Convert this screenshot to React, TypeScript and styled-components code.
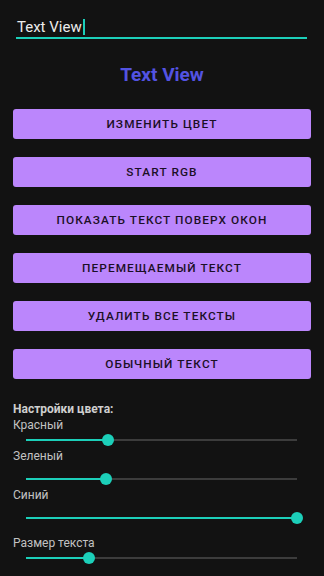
import React from "react";
import styled, { createGlobalStyle } from "styled-components";

const GlobalStyle = createGlobalStyle`
    html, body {
        margin: 0;
        padding: 0;
        background: #121212;
    }
    body {
        font-family: Roboto, "Noto Sans", "Liberation Sans", sans-serif;
        width: 324px;
        height: 576px;
        overflow: hidden;
    }
`

const Screen = styled.div`
    display: flex;
    flex-direction: column;
    width: 324px;
    height: 576px;
    background: #121212;
`

//入力欄(下線付き)
const Field = styled.div`
    margin: 18px 17px 0 16px;
    padding: 0 0 1px 1px;
    border-bottom: 2px solid #1ccfb9;
    height: 18px;
    display: flex;
    align-items: center;
`

const FieldText = styled.span`
    font-size: 15px;
    line-height: 18px;
    color: #ececec;
`

const Caret = styled.span`
    display: inline-block;
    width: 2px;
    height: 16px;
    margin-left: 1px;
    background: #1ccfb9;
`

const Title = styled.h1`
    margin: 25px 0 0;
    font-size: 19px;
    line-height: 22px;
    font-weight: 700;
    text-align: center;
    color: #5353e2;
`

const ButtonList = styled.div`
    display: flex;
    flex-direction: column;
    gap: 18px;
    margin: 23px 13px 0;
`

const ActionButton = styled.button`
    height: 30px;
    border: none;
    border-radius: 3px;
    background: #bb86fc;
    color: #1b0f26;
    font-family: Roboto, "Noto Sans", sans-serif;
    font-size: 11.8px;
    font-weight: 500;
    letter-spacing: 1.1px;
    text-transform: uppercase;
    padding: 0;
    cursor: pointer;
`

const Settings = styled.div`
    display: flex;
    flex-direction: column;
    margin: 23px 0 0 13px;
`

const Heading = styled.div`
    font-size: 12px;
    line-height: 14px;
    font-weight: 700;
    color: #cfcfcf;
`

const Label = styled.div<{ $top: number }>`
    margin-top: ${(p) => p.$top}px;
    font-size: 12px;
    line-height: 14px;
    color: #c2c2c2;
`

const SliderBox = styled.div<{ $top: number }>`
    position: relative;
    margin: ${(p) => p.$top}px 0 0 13px;
    width: 271px;
    height: 16px;
`

const Track = styled.div`
    position: absolute;
    left: 0;
    right: 0;
    top: 7px;
    height: 2px;
    background: #3c3c3c;
`

const ActiveTrack = styled.div`
    position: absolute;
    left: 0;
    top: 7px;
    height: 2px;
    background: #1ccfb9;
`

const Thumb = styled.div`
    position: absolute;
    top: 2px;
    width: 12px;
    height: 12px;
    margin-left: -6px;
    border-radius: 50%;
    background: #1ccfb9;
`

type SliderProps = {
    value: number
    top: number
}

const Slider = ({ value, top }: SliderProps) => (
    <SliderBox $top={top}>
        <Track />
        <ActiveTrack style={{ width: `${value * 100}%` }} />
        <Thumb style={{ left: `${value * 100}%` }} />
    </SliderBox>
)

const buttons = [
    "Изменить цвет",
    "Start RGB",
    "Показать текст поверх окон",
    "Перемещаемый текст",
    "Удалить все тексты",
    "Обычный текст",
]

const App = () => {
    return (
        <Screen>
            <GlobalStyle />
            <Field>
                <FieldText>Text View</FieldText>
                <Caret />
            </Field>
            <Title>Text View</Title>
            <ButtonList>
                {buttons.map((b) => (
                    <ActionButton key={b}>{b}</ActionButton>
                ))}
            </ButtonList>
            <Settings>
                <Heading>Настройки цвета:</Heading>
                <Label $top={2}>Красный</Label>
                <Slider value={0.302} top={0} />
                <Label $top={1}>Зеленый</Label>
                <Slider value={0.295} top={8} />
                <Label $top={1}>Синий</Label>
                <Slider value={1} top={8} />
                <Label $top={10}>Размер текста</Label>
                <Slider value={0.232} top={0} />
            </Settings>
        </Screen>
    )
}

export default App
